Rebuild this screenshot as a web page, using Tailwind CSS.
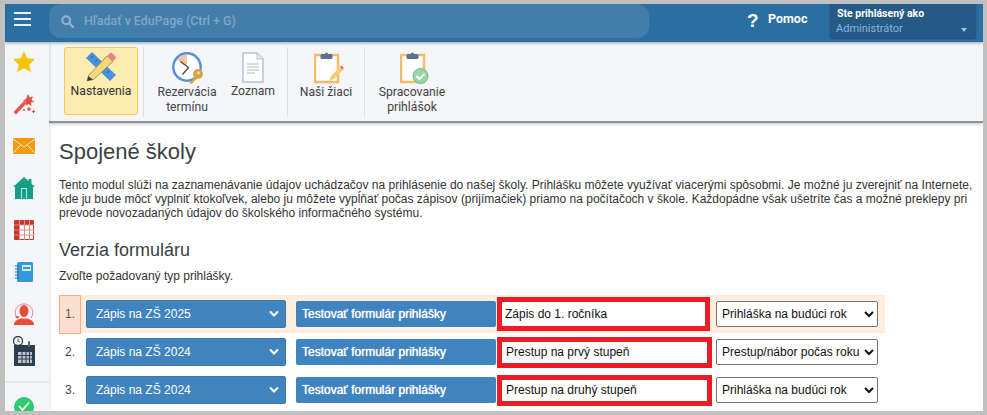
<!DOCTYPE html>
<html lang="sk">
<head>
  <meta charset="UTF-8" />
  <title>Spojené školy</title>
  <script src="https://cdn.jsdelivr.net/npm/@tailwindcss/browser@4"></script>
</head>
<body class="bg-[#c0c0c0] h-[415px] overflow-hidden pt-[4px] pl-[5px] font-['Liberation_Sans',Arial,sans-serif] text-[12px] text-[#333]">
  <div class="w-[978px] h-[407px] bg-white overflow-hidden flex flex-col">

    <!-- Top bar -->
    <div class="h-[38px] shrink-0 bg-[#2b6ea2] flex relative z-20 shadow-[0_1px_3px_rgba(0,0,0,0.35)]">
      <div class="w-[44px] shrink-0 flex flex-col gap-[4px] pt-[8px] pl-[9px]">
        <div class="w-[17px] h-[2px] bg-white/90"></div>
        <div class="w-[17px] h-[2px] bg-white/90"></div>
        <div class="w-[17px] h-[2px] bg-white/90"></div>
      </div>
      <div class="w-[600px] h-[34px] bg-[#437eab] rounded-[12px] flex items-center pl-[12px] gap-[10px]">
        <svg width="13" height="13" viewBox="0 0 13 13" fill="none" stroke="#8fb3cf" stroke-width="2.2"><circle cx="5.2" cy="5.2" r="3.9"/><path d="M8 8l4 4" stroke-linecap="round"/></svg>
        <span class="font-['Roboto',sans-serif] font-medium text-[12.4px] text-[#7fa8c8]">Hľadať v EduPage (Ctrl + G)</span>
      </div>
      <div class="ml-[98px] w-[10px] h-[34px] flex items-center font-bold text-white text-[19px]">?</div>
      <div class="ml-[11px] h-[30px] w-[62px] flex items-center font-bold text-white text-[12.5px] font-['Roboto',sans-serif]">Pomoc</div>
      <div class="w-[146px] h-[34px] bg-[#245a85] rounded-b-[3px] relative px-[7px] pt-[3px] leading-[14px] shadow-[0_1px_2px_rgba(0,0,0,0.3)]">
        <div class="font-bold text-white text-[10.5px] font-['Roboto',sans-serif]">Ste prihlásený ako</div>
        <div class="text-[#8db6dc] text-[11px] mt-px -ml-px font-['Roboto',sans-serif]">Administrátor</div>
        <div class="absolute right-[9px] top-[24px] w-0 h-0 border-x-[3.5px] border-x-transparent border-t-[4px] border-t-[#a9c3d8]"></div>
      </div>
    </div>

    <div class="flex flex-1 min-h-0">
      <!-- Sidebar -->
      <div class="w-[44px] shrink-0 bg-[#f4f6f9] flex flex-col relative z-10 shadow-[1px_0_3px_rgba(0,0,0,0.12)]">
        <div class="h-[41px] pb-[2px] pr-[6px] shrink-0 flex items-center justify-center">
          <svg width="22" height="22" viewBox="0 0 22 22"><path d="M11 0l3.300 7.300 7.700.8-5.700 5.300 1.600 7.600L11 17.200 4.100 21l1.600-7.600L0 8.100l7.700-.8z" fill="#f3c40f"/></svg>
        </div>
        <div class="h-[42px] pr-[6px] shrink-0 flex items-center justify-center">
          <svg width="24" height="22" viewBox="0 0 24 22"><path d="M1.500 19L12 8l2.500 2.500L4 21.500z" fill="#e8544a"/><path d="M16 1l1.500 3.500 3.500-1-1.500 3.500 3 2-3.500.5.5 3.500-3-2-2.500 1.500v-3.500l-3-1.500 3-1.500z" fill="#e74c3c"/><path d="M15 16h4M17 14v4" stroke="#e74c3c" stroke-width="1.300"/><path d="M20 18.500h3M21.500 17v3M11 17h2M12 16v2" stroke="#e74c3c" stroke-width="1"/></svg>
        </div>
        <div class="h-[42px] pr-[6px] shrink-0 flex items-center justify-center">
          <svg width="22" height="16" viewBox="0 0 22 16"><rect width="22" height="16" fill="#f39c12"/><path d="M0 1l11 8 11-8M0 15l8-8M22 15l-8-8" stroke="#fde3b5" stroke-width="1" fill="none"/></svg>
        </div>
        <div class="h-[42px] pr-[6px] shrink-0 flex items-center justify-center">
          <svg width="22" height="22" viewBox="0 0 22 22"><path d="M11 0L0 10h2v12h18V10h2l-3.500-3.200V2h-3v2z" fill="#16a085"/><rect x="8" y="11" width="6" height="11" fill="#bfe6dd"/><rect x="9" y="12" width="4" height="10" fill="#16a085"/></svg>
        </div>
        <div class="h-[42px] pr-[6px] shrink-0 flex items-center justify-center">
          <svg width="20" height="20" viewBox="0 0 20 20"><rect width="20" height="20" rx="1" fill="#c0392b"/><path d="M6 5h13v14H6z" fill="#fff"/><path d="M0 5h20M0 10h20M0 15h20M5.500 0v20M10.500 0v20M15.500 0v20" stroke="#dc8f87" stroke-width="1"/></svg>
        </div>
        <div class="h-[42px] pr-[6px] shrink-0 flex items-center justify-center">
          <svg width="18" height="20" viewBox="0 0 18 20"><rect x="2" width="16" height="20" rx="1.500" fill="#3498db"/><rect x="7" y="3" width="9" height="6" fill="#d6eaf8"/><rect x="8" y="5" width="7" height="2" fill="#3498db"/><path d="M0 4h4M0 7h4M0 10h4M0 13h4M0 16h4" stroke="#2471a3" stroke-width="1"/></svg>
        </div>
        <div class="h-[42px] pr-[6px] shrink-0 flex items-center justify-center">
          <svg width="20" height="22" viewBox="0 0 20 22"><path d="M3 15A8.800 8.800 0 1 1 17 15" fill="none" stroke="#ec8a80" stroke-width="1"/><path d="M1 13l2.500 3 2-2.500z" fill="#e74c3c"/><ellipse cx="10" cy="8" rx="4.500" ry="6" fill="#e74c3c"/><path d="M0 22c0-4 3-5.500 7-6.500h6c4 1 7 2.500 7 6.500z" fill="#e74c3c"/></svg>
        </div>
        <div class="pt-[1px] pr-[6px] shrink-0 flex justify-center">
          <svg width="22" height="30" viewBox="0 0 22 30"><rect x="1" y="9" width="21" height="21" fill="#2c3e50"/><path d="M5 16h14v11H5z" fill="#bcc3ca"/><path d="M5 19.500h14M5 23h14M9 16v11M13 16v11M16.500 16v11" stroke="#2c3e50" stroke-width="1"/><rect x="15" y="5" width="2" height="6" rx="1" fill="#5d6d7e"/><circle cx="5" cy="5" r="4.500" fill="#fff" stroke="#2c3e50" stroke-width="1.300"/><path d="M5 2.500V5l2 1.200" stroke="#2c3e50" fill="none"/></svg>
        </div>
        <div class="border-t-2 border-[#e3e6ea] mt-[15px] shrink-0"></div>
        <div class="pt-[14px] pr-[6px] shrink-0 flex justify-center">
          <svg width="20" height="20" viewBox="0 0 20 20" class="shrink-0"><circle cx="10" cy="10" r="10" fill="#2ecc71"/><path d="M5 9l3.500 4L15 5.500" stroke="#fff" stroke-width="1.800" fill="none"/></svg>
        </div>
      </div>

      <div class="flex-1 min-w-0 flex flex-col">
        <!-- Toolbar -->
        <div class="h-[81px] shrink-0 bg-[#f4f6f9] border-b-2 border-[#8f9296] flex items-start pt-[5px] pl-[15px] font-['Roboto',sans-serif] text-[12.2px] leading-[14.5px] text-center text-[#444] shadow-[0_1px_3px_rgba(0,0,0,0.25)] relative">
          <div class="w-[74px] h-[68px] bg-[#fdedb0] border border-[#f5c958] rounded-[3px] flex flex-col items-center pt-[4px] text-[#333] gap-[2px]">
            <svg width="30" height="30" viewBox="0 0 30 30"><path d="M0 6l6-6 24 23-6 6z" fill="#4a8fd9"/><path d="M5 6l2-2M9 10l2-2M13 14l2-2M17 17l2-2M21 21l2-2" stroke="#1f5fa8" stroke-width="1"/><path d="M2 24L21 4l6 5.500L7 28z" fill="#f8d77a" stroke="#8b7a3a" stroke-width=".7"/><path d="M21 4l2.500-2.500a2 2 0 0 1 3 0L29 4a2 2 0 0 1 0 3l-2 2.500z" fill="#e9838a"/><path d="M2 24l-1 5 6-1z" fill="#3b3b3b"/></svg>
            <span>Nastavenia</span>
          </div>
          <div class="w-px h-[70px] bg-[#dcdfe3] ml-[5px]"></div>
          <div class="w-[78px] flex flex-col items-center pt-[5px] ml-[4px] gap-[1px]">
            <svg width="32" height="32" viewBox="0 0 32 32" class="ml-[2px]"><circle cx="15" cy="15" r="13.700" fill="#fff" stroke="#5b8fd8" stroke-width="2.500"/><path d="M15 15V2.500A12.500 12.500 0 0 0 5 8z" fill="#f9c4a5"/><path d="M8.500 9.500l8 6-6 7" stroke="#4a4a4a" stroke-width="1.300" fill="none"/><circle cx="26" cy="22" r="5" fill="#d9a441"/><path d="M23 25l-6 6 2 1 2-1 1-2 2-1 1-2z" fill="#d9a441"/><circle cx="26.500" cy="21" r="1.400" fill="#f4e0ab"/></svg>
            <span>Rezervácia<br />termínu</span>
          </div>
          <div class="w-[54px] flex flex-col items-center pt-[5px] gap-[1px]">
            <svg width="22" height="31" viewBox="0 0 22 31"><path d="M1 1h14l6 6v23H1z" fill="#fff" stroke="#b4c3d3" stroke-width="1.500"/><path d="M15 1v6h6" fill="#e4eaf0" stroke="#b4c3d3"/><path d="M5 12h12M5 15h12M5 18h12M5 21h8" stroke="#aeb6bd" stroke-width="1"/></svg>
            <span>Zoznam</span>
          </div>
          <div class="w-px h-[70px] bg-[#dcdfe3] ml-[7px]"></div>
          <div class="w-[76px] flex flex-col items-center pt-[5px] gap-[1px]">
            <svg width="30" height="32" viewBox="0 0 30 32" class="ml-[6px]"><rect x="1" y="3" width="23" height="27" fill="#fff" stroke="#f5bb6b" stroke-width="2.500"/><rect x="6.500" y="2" width="12" height="5" rx="1.500" fill="#5b7190"/><circle cx="12.500" cy="2" r="1.500" fill="#5b7190"/><path d="M15 29l2-5 9-9 3 3-9 9z" fill="#f5cf6b"/><path d="M26 15l1.500-1.500 2 2-.5 2.500z" fill="#e8606a"/></svg>
            <span>Naši žiaci</span>
          </div>
          <div class="w-px h-[70px] bg-[#dcdfe3]"></div>
          <div class="w-[94px] flex flex-col items-center pt-[5px] gap-[1px]">
            <svg width="32" height="32" viewBox="0 0 32 32" class="ml-[8px]"><rect x="1" y="3" width="23" height="27" fill="#fff" stroke="#f5bb6b" stroke-width="2.500"/><rect x="6.500" y="2" width="12" height="5" rx="1.500" fill="#5b7190"/><circle cx="12.500" cy="2" r="1.500" fill="#5b7190"/><circle cx="20.500" cy="24" r="7.500" fill="#9ad5a8" stroke="#6fbf83" stroke-width="1"/><path d="M16.500 24l3 3 5-5" stroke="#fff" stroke-width="1.800" fill="none"/></svg>
            <span>Spracovanie<br />prihlášok</span>
          </div>
        </div>

        <!-- Content -->
        <div class="flex-1 min-h-0 pl-[10px] pt-[16px]">
          <h1 class="text-[22px] leading-[26px] text-[#3a3f45]">Spojené školy</h1>
          <p class="mt-[13px] w-[915px] leading-[14px] text-[#333]">Tento modul slúži na zaznamenávanie údajov uchádzačov na prihlásenie do našej školy. Prihlášku môžete využívať viacerými spôsobmi. Je možné ju zverejniť na Internete, kde ju bude môcť vyplniť ktokoľvek, alebo ju môžete vypĺňať počas zápisov (prijímačiek) priamo na počítačoch v škole. Každopádne však ušetríte čas a možné preklepy pri prevode novozadaných údajov do školského informačného systému.</p>
          <h2 class="mt-[19px] text-[18px] leading-[22px] text-[#3a3f45]">Verzia formuláru</h2>
          <p class="mt-[8px] leading-[14px]">Zvoľte požadovaný typ prihlášky.</p>

          <div class="mt-[12px] flex flex-col w-[826px]">
            <!-- Row 1 -->
            <div class="h-[38px] flex items-center bg-[#ffeedd]">
              <div class="w-[22px] h-[39px] mr-[5px] shrink-0 bg-[#fde0d0] border border-[#ffa988] flex items-center justify-center text-[#555]">1.</div>
              <div class="relative w-[200px] h-[28px] shrink-0">
                <select class="appearance-none w-full h-full bg-[#4084bf] border border-[#3a78ae] rounded-[2px] text-white pl-[9px] font-medium"><option>Zápis na ZŠ 2025</option></select>
                <svg class="absolute right-[7px] top-[10px]" width="10" height="8" viewBox="0 0 10 8"><path d="M1 1.500l4 4 4-4" stroke="#fff" stroke-width="2" fill="none"/></svg>
              </div>
              <button class="ml-[10px] w-[200px] h-[26px] shrink-0 bg-[#4084bf] rounded-[2px] text-white [text-shadow:0_0_1px_#fff] text-left pl-[6px]">Testovať formulár prihlášky</button>
              <div class="w-[220px] shrink-0 ml-px">
                <input value="Zápis do 1. ročníka" class="block w-[213px] h-[34px] border-[5px] border-[#ed1c24] bg-white pl-[3px] text-[#111]" />
              </div>
              <select class="w-[162px] h-[26px] -ml-px shrink-0 bg-white border border-[#767676] rounded-[2px] text-[#111] pl-[1px]"><option>Prihláška na budúci rok</option></select>
            </div>
            <!-- Row 2 -->
            <div class="h-[38px] flex items-center">
              <div class="w-[22px] mr-[5px] shrink-0 text-center text-[#444]">2.</div>
              <div class="relative w-[200px] h-[28px] shrink-0">
                <select class="appearance-none w-full h-full bg-[#4084bf] border border-[#3a78ae] rounded-[2px] text-white pl-[9px] font-medium"><option>Zápis na ZŠ 2024</option></select>
                <svg class="absolute right-[7px] top-[10px]" width="10" height="8" viewBox="0 0 10 8"><path d="M1 1.500l4 4 4-4" stroke="#fff" stroke-width="2" fill="none"/></svg>
              </div>
              <button class="ml-[10px] w-[200px] h-[26px] shrink-0 bg-[#4084bf] rounded-[2px] text-white [text-shadow:0_0_1px_#fff] text-left pl-[6px]">Testovať formulár prihlášky</button>
              <div class="w-[220px] shrink-0 ml-px">
                <input value="Prestup na prvý stupeň" class="block w-[215px] h-[31px] border-[5px] border-[#ed1c24] bg-white pl-[4px] text-[#111]" />
              </div>
              <select class="w-[162px] h-[26px] -ml-px shrink-0 bg-white border border-[#767676] rounded-[2px] text-[#111] pl-[1px]"><option>Prestup/nábor počas roku</option></select>
            </div>
            <!-- Row 3 -->
            <div class="h-[38px] flex items-center">
              <div class="w-[22px] mr-[5px] shrink-0 text-center text-[#444]">3.</div>
              <div class="relative w-[200px] h-[28px] shrink-0">
                <select class="appearance-none w-full h-full bg-[#4084bf] border border-[#3a78ae] rounded-[2px] text-white pl-[9px] font-medium"><option>Zápis na ZŠ 2024</option></select>
                <svg class="absolute right-[7px] top-[10px]" width="10" height="8" viewBox="0 0 10 8"><path d="M1 1.500l4 4 4-4" stroke="#fff" stroke-width="2" fill="none"/></svg>
              </div>
              <button class="ml-[10px] w-[200px] h-[26px] shrink-0 bg-[#4084bf] rounded-[2px] text-white [text-shadow:0_0_1px_#fff] text-left pl-[6px]">Testovať formulár prihlášky</button>
              <div class="w-[220px] shrink-0 ml-px">
                <input value="Prestup na druhý stupeň" class="block w-[215px] h-[31px] border-[5px] border-[#ed1c24] bg-white pl-[4px] text-[#111]" />
              </div>
              <select class="w-[162px] h-[26px] -ml-px shrink-0 bg-white border border-[#767676] rounded-[2px] text-[#111] pl-[1px]"><option>Prihláška na budúci rok</option></select>
            </div>
          </div>
        </div>
      </div>
    </div>
  </div>
</body>
</html>
